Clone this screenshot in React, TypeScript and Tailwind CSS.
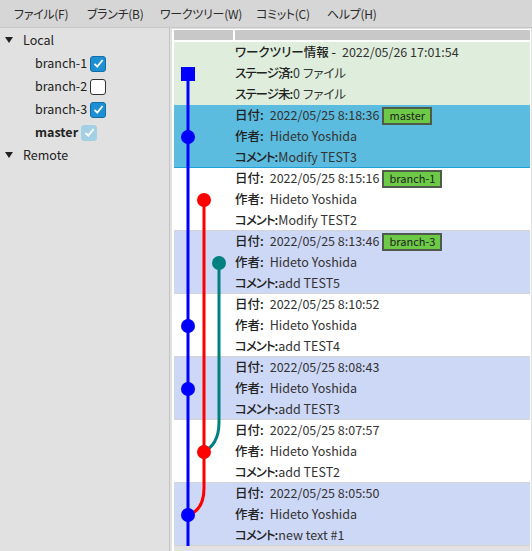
import React from 'react';

type Commit = {
  date: string;
  tag?: string;
  comment: string;
  row: string;
};

const commits: Commit[] = [
  { date: '2022/05/25 8:18:36', tag: 'master', comment: 'Modify TEST3', row: 'bg-[#5bbcdf] border-[#1fa3d8]' },
  { date: '2022/05/25 8:15:16', tag: 'branch-1', comment: 'Modify TEST2', row: 'bg-white border-[#d3d3d3]' },
  { date: '2022/05/25 8:13:46', tag: 'branch-3', comment: 'add TEST5', row: 'bg-[#cdd7f6] border-[#d3d3d3]' },
  { date: '2022/05/25 8:10:52', comment: 'add TEST4', row: 'bg-white border-[#d3d3d3]' },
  { date: '2022/05/25 8:08:43', comment: 'add TEST3', row: 'bg-[#cdd7f6] border-[#d3d3d3]' },
  { date: '2022/05/25 8:07:57', comment: 'add TEST2', row: 'bg-white border-[#d3d3d3]' },
  { date: '2022/05/25 8:05:50', comment: 'new text #1', row: 'bg-[#cdd7f6] border-[#d3d3d3]' },
];

const menus = [
  { label: 'ファイル(F)', w: 'w-[73px]' },
  { label: 'ブランチ(B)', w: 'w-[73px]' },
  { label: 'ワークツリー(W)', w: 'w-[96px]' },
  { label: 'コミット(C)', w: 'w-[71px]' },
  { label: 'ヘルプ(H)', w: 'w-[80px]' },
];

const Triangle = () => (
  <svg width="8" height="7" viewBox="0 0 8 7" className="shrink-0">
    <polygon points="0,0 8,0 4,6" fill="#222" />
  </svg>
);

const Check = ({ variant }: { variant: 'on' | 'off' | 'disabled' }) => {
  const box =
    variant === 'on'
      ? 'bg-[#1e8fd3] border-[#0f6ea8]'
      : variant === 'off'
        ? 'bg-white border-[#333]'
        : 'bg-[#a3d0e4] border-[#a3d0e4]';
  return (
    <span className={`inline-flex h-[16px] w-[16px] items-center justify-center rounded-[3px] border ${box}`}>
      {variant !== 'off' && (
        <svg width="11" height="11" viewBox="0 0 11 11">
          <polyline points="1.5,5.8 4.3,8.6 9.6,2" fill="none" stroke="white" strokeWidth="1.8" />
        </svg>
      )}
    </span>
  );
};

const Line = ({
  label,
  value,
  gap = 'ml-[6px]',
  tight = false,
}: {
  label: string;
  value: React.ReactNode;
  gap?: string;
  tight?: boolean;
}) => (
  <div className="flex h-[21px] items-center whitespace-nowrap">
    <span className={`font-medium text-[#222] ${tight ? 'tracking-[-1px]' : ''}`}>{label}</span>
    <span className={gap}>{value}</span>
  </div>
);

export default function App() {
  return (
    <div className="flex h-[551px] w-[532px] flex-col overflow-hidden bg-[#e1e1e1] font-['Noto_Sans_CJK_JP','Noto_Sans',sans-serif] text-[#333] [font-feature-settings:'palt']">
      {/* menu bar */}
      <div className="flex h-[28px] items-center border-b border-[#c6c6c6] bg-[#d6d6d6] pl-[14px] text-[12px] text-[#2a2a2a]">
        {menus.map((m) => (
          <span key={m.label} className={`${m.w} shrink-0 whitespace-nowrap tracking-[-0.3px]`}>
            {m.label}
          </span>
        ))}
      </div>

      <div className="flex flex-1">
        {/* branch tree */}
        <div className="w-[170px] shrink-0 border-r border-[#c4c4c4] pt-[1px] text-[12.5px] text-[#222]">
          <div className="flex h-[23px] items-center gap-[10px] pl-[5px]">
            <Triangle />
            <span>Local</span>
          </div>
          {[
            { name: 'branch-1', v: 'on' as const },
            { name: 'branch-2', v: 'off' as const },
            { name: 'branch-3', v: 'on' as const },
            { name: 'master', v: 'disabled' as const },
          ].map((b) => (
            <div key={b.name} className="flex h-[23px] items-center gap-[3px] pl-[35px]">
              <span className={b.name === 'master' ? 'font-semibold' : ''}>{b.name}</span>
              <Check variant={b.v} />
            </div>
          ))}
          <div className="flex h-[23px] items-center gap-[10px] pl-[5px]">
            <Triangle />
            <span>Remote</span>
          </div>
        </div>

        {/* commit list */}
        <div className="flex flex-1 flex-col">
          <div className="ml-[2px] mr-[1px] mt-[1px] flex flex-1 flex-col border-l-2 border-r border-t border-white">
            <div className="flex h-[12px] bg-white pb-[2px]">
              <div className="w-[59px] bg-[#c8c8c8]" />
              <div className="ml-[2px] flex-1 bg-[#c8c8c8]" />
            </div>

            <div className="relative text-[12.5px]">
              <div className="h-[63px] bg-[#dfeedc] pl-[61px]">
                <Line label="ワークツリー情報 -" value="2022/05/26 17:01:54" />
                <Line label="ステージ済:" value="0 ファイル" gap="ml-[1px]" tight />
                <Line label="ステージ未:" value="0 ファイル" gap="ml-[1px]" tight />
              </div>

              {commits.map((c) => (
                <div key={c.date} className={`h-[63px] border-b pl-[61px] ${c.row}`}>
                  <Line
                    label="日付:"
                    value={
                      <span className="inline-flex items-center">
                        {c.date}
                        {c.tag && (
                          <span className="ml-[3px] inline-flex h-[18px] items-center border-2 border-[#505a4a] bg-[#6dca47] px-[5px] text-[11px] leading-none text-[#222]">
                            {c.tag}
                          </span>
                        )}
                      </span>
                    }
                  />
                  <Line label="作者:" value="Hideto Yoshida" />
                  <Line label="コメント:" value={c.comment} gap="ml-[1px]" tight />
                </div>
              ))}

              {/* commit graph */}
              <svg className="absolute left-0 top-0" width="60" height="504" viewBox="0 0 60 504">
                <path d="M45 221 V380 C45 398 38 405 30 410" fill="none" stroke="#008080" strokeWidth="3" />
                <path d="M30 158 V446 C30 462 24 470 14 473" fill="none" stroke="#ff0000" strokeWidth="3" />
                <line x1="14" y1="32" x2="14" y2="504" stroke="#0000ff" strokeWidth="3" />
                <rect x="7" y="25" width="14" height="14" fill="#0000ff" />
                <circle cx="14" cy="95" r="7" fill="#0000ff" />
                <circle cx="30" cy="158" r="7" fill="#ff0000" />
                <circle cx="45" cy="221" r="7" fill="#008080" />
                <circle cx="14" cy="284" r="7" fill="#0000ff" />
                <circle cx="14" cy="347" r="7" fill="#0000ff" />
                <circle cx="30" cy="410" r="7" fill="#ff0000" />
                <circle cx="14" cy="473" r="7" fill="#0000ff" />
              </svg>
            </div>
          </div>
        </div>
      </div>
    </div>
  );
}
